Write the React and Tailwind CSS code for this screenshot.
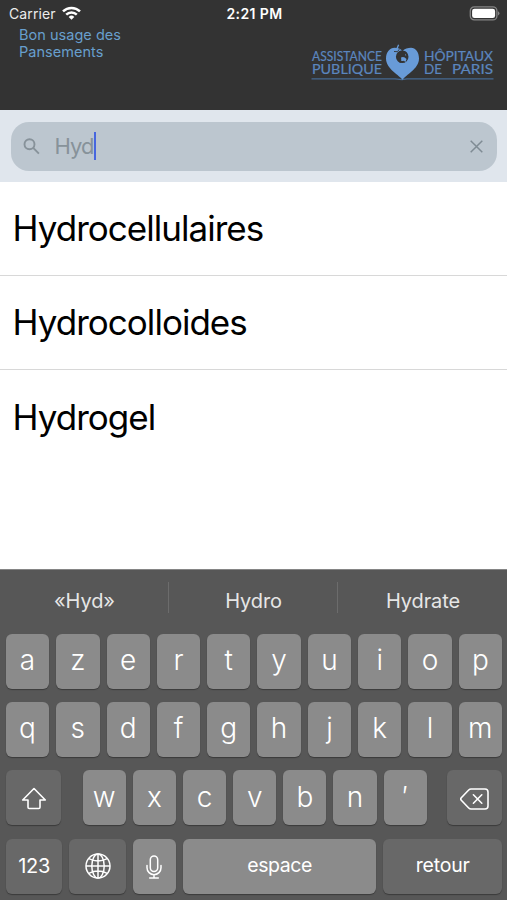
import React from "react";

function Key({ children, className = "", label = "text-[28px] font-[360] pb-[2px]", dark = false }) {
  return (
    <div
      className={`flex h-[55px] items-center justify-center rounded-[6px] leading-none text-white shadow-[0_1px_1px_#3b3b3b] ${
        dark ? "bg-[#686868]" : "bg-[#8b8b8b]"
      } ${label} ${className}`}
    >
      {children}
    </div>
  );
}

function LetterRow({ letters }) {
  return (
    <div className="grid grid-cols-10 gap-[7px]">
      {letters.split("").map((c) => (
        <Key key={c}>{c}</Key>
      ))}
    </div>
  );
}

function StatusBar() {
  return (
    <div className="grid h-[27px] grid-cols-3 items-center pl-[9px] pr-[7px] text-white">
      <div className="flex items-center gap-[6px]">
        <span className="text-[14px] leading-none tracking-[0.12px] text-[#ececec]">Carrier</span>
        <svg className="mb-[2px] h-[14px] w-[19px]" viewBox="0 0 19 14" fill="none" stroke="#fff" strokeWidth="2.5">
          <path d="M1 5.4a12.2 12.2 0 0 1 17 0" />
          <path d="M4.2 8.6a7.6 7.6 0 0 1 10.6 0" />
          <path d="M9.5 13.7 6.7 10.9a4 4 0 0 1 5.6 0Z" fill="#fff" stroke="none" />
        </svg>
      </div>
      <span className="text-center text-[14px] font-semibold leading-none tracking-[0.4px]">2:21 PM</span>
      <svg className="h-[15px] w-[31px] justify-self-end" viewBox="0 0 31 15">
        <rect x="1.3" y="0.9" width="26.6" height="13" rx="4" fill="none" stroke="#858585" strokeWidth="1.3" />
        <rect x="3.1" y="2.7" width="23" height="9.4" rx="2.4" fill="#fff" />
        <path d="M29 5.3q3 2.1 0 4.2Z" fill="#858585" />
      </svg>
    </div>
  );
}

function Logo() {
  return (
    <svg className="h-[39px] w-[184px]" viewBox="0 0 184 39">
      <g fontFamily="Lato, sans-serif" fontSize="13" fill="#5b86bf" stroke="#5b86bf" strokeWidth="0.2">
        <text x="1" y="19" textLength="70" lengthAdjust="spacingAndGlyphs">ASSISTANCE</text>
        <text x="1" y="32" textLength="70" lengthAdjust="spacingAndGlyphs">PUBLIQUE</text>
        <text x="113" y="19" textLength="69" lengthAdjust="spacingAndGlyphs">HÔPITAUX</text>
        <text x="113" y="32" textLength="18" lengthAdjust="spacingAndGlyphs">DE</text>
        <text x="141" y="32" textLength="41" lengthAdjust="spacingAndGlyphs">PARIS</text>
      </g>
      <path d="M0.5 36.9H84l7 .7 5-.7h86.5" fill="none" stroke="#466991" strokeWidth="1.2" />
      <path d="M91.5 37.8C89 33.5 75 27 75 16.5C75 10 79 5.8 83.5 5.8C87 5.8 89.5 7 91.5 9C93.5 7 97 5.8 100 5.8C104.5 5.8 108 10 108 16.5C108 27 94.5 33 91.5 37.8Z" fill="#689bd8" />
      <circle cx="91.2" cy="14.8" r="5.2" fill="none" stroke="#333" strokeWidth="2.2" />
      <path d="M86 14q0 4.5 3.5 7l1.5-4 1.5 1 3.5-.5 1-2.5-3-2 1.500-3-4-1.500-3 .5Z" fill="#333" />
      <path d="M90 15.500q3-1.500 5.500 1.500l-1 3-2-1.500-2 .5Z" fill="#689bd8" />
      <path d="M83 9.500l3.500 .2 1.800-2.500" fill="none" stroke="#333" strokeWidth="0.9" />
      <path d="M85.3 8.2 87.6 2.8" fill="none" stroke="#689bd8" strokeWidth="1.3" />
    </svg>
  );
}

export default function App() {
  return (
    <div className="flex h-[900px] w-[507px] flex-col overflow-hidden bg-white font-['Inter','Liberation_Sans',sans-serif]">
      <header className="h-[110px] shrink-0 bg-[#333333]">
        <StatusBar />
        <div className="flex justify-between pl-[19px] pr-[12px]">
          <p className="mt-[-1px] w-[130px] text-[14.5px] leading-[17.4px] tracking-[0.03px] text-[#689fcd]">
            Bon usage des
            <br />
            Pansements
          </p>
          <div className="pt-[15px]">
            <Logo />
          </div>
        </div>
      </header>

      <div className="h-[72px] shrink-0 bg-[#e0e6ed] px-[10.5px] pt-[12px]">
        <div className="flex h-[49px] items-center rounded-[18px] bg-[#bcc6cf] pl-[12px] pr-[14px]">
          <svg className="h-[17px] w-[17px]" viewBox="0 0 17 17" fill="none" stroke="#87929a" strokeWidth="1.9">
            <circle cx="6.5" cy="6.2" r="5" />
            <path d="m10.2 9.9 5.7 5.8" />
          </svg>
          <span className="ml-[15px] pb-[2px] text-[22px] leading-none tracking-[-0.9px] text-[#87929a]">Hyd</span>
          <span className="mb-[2px] h-[28px] w-[2.5px] bg-[#4766df]" />
          <svg className="ml-auto h-[13px] w-[13px]" viewBox="0 0 13 13" fill="none" stroke="#7f8b94" strokeWidth="1.5">
            <path d="m.7.7 11.6 11.6M12.3.7.7 12.3" />
          </svg>
        </div>
      </div>

      <main className="flex-1 text-[35px] text-black">
        {["Hydrocellulaires", "Hydrocolloides", "Hydrogel"].map((t, i) => (
          <div
            key={t}
            className={`flex h-[94px] items-center pl-[12.5px] leading-none tracking-[-0.97px] ${i < 2 ? "border-b-[1.5px] border-[#d8d8d8]" : ""}`}
          >
            {t}
          </div>
        ))}
      </main>

      <section className="h-[331px] shrink-0 border-t border-[#858585] bg-[#575757]">
        <div className="grid h-[63.5px] grid-cols-3 pt-[12px] text-[20px] tracking-[-0.1px] text-[#e6e6e6]">
          {["«Hyd»", "Hydro", "Hydrate"].map((t, i) => (
            <div
              key={t}
              className={`flex h-[31px] items-center justify-center pl-px pt-[7px] leading-none ${i < 2 ? "border-r border-[#6c6c6c]" : ""}`}
            >
              {t}
            </div>
          ))}
        </div>
        <div className="flex flex-col gap-[13.4px] pl-[5.9px] pr-[5px]">
          <LetterRow letters="azertyuiop" />
          <LetterRow letters="qsdfghjklm" />
          <div className="flex justify-between">
            <Key dark className="w-[55.5px]" label="">
              <svg className="mt-[2px] h-[23px] w-[26px]" viewBox="0 0 26 23" fill="none" stroke="#fff" strokeWidth="1.6" strokeLinejoin="round">
                <path d="M13 1.5 1.7 13H7v7.2q0 1.3 1.3 1.3h9.4q1.3 0 1.3-1.3V13h5.3Z" />
              </svg>
            </Key>
            <div className="ml-px grid w-[344px] grid-cols-7 gap-[7px]">
              {"wxcvbn′".split("").map((c) => (
                <Key key={c}>{c}</Key>
              ))}
            </div>
            <Key dark className="w-[55px]" label="">
              <svg className="mt-[2px] h-[22px] w-[29px]" viewBox="0 0 29 22" fill="none" stroke="#fff" strokeWidth="1.6" strokeLinejoin="round" strokeLinecap="round">
                <path d="M11 1h14q3 0 3 3v14q0 3-3 3H11q-1.3 0-2.3-1L1.3 12.3q-1.2-1.3 0-2.6L8.7 2q1-1 2.3-1Z" />
                <path d="m13.4 6.8 8.4 8.4M21.8 6.8l-8.4 8.4" />
              </svg>
            </Key>
          </div>
          <div className="flex gap-[7px]">
            <Key dark className="w-[56.5px]" label="text-[20px] tracking-[-0.3px]">123</Key>
            <Key dark className="w-[56.5px]" label="">
              <svg className="h-[26px] w-[26px]" viewBox="0 0 26 26" fill="none" stroke="#fff" strokeWidth="1.5">
                <circle cx="13" cy="13" r="12" />
                <ellipse cx="13" cy="13" rx="6.2" ry="12" />
                <path d="M13 1v24M1 13h24M3.8 5.6q9.2 4.6 18.4 0M3.8 20.4q9.2-4.6 18.4 0" />
              </svg>
            </Key>
            <Key className="w-[43px]" label="">
              <svg className="mt-[2px] h-[24px] w-[16px]" viewBox="0 0 16 24" fill="none" stroke="#fff" strokeWidth="1.5" strokeLinecap="round">
                <rect x="4.3" y="1" width="7.4" height="15.5" rx="3.7" />
                <path d="M1 10.5v2.2a7 7 0 0 0 14 0v-2.2M8 19.7V23M3.7 23h8.6" />
              </svg>
            </Key>
            <Key className="w-[193.5px]" label="text-[19.5px] tracking-[-0.4px] pb-px">espace</Key>
            <Key dark className="flex-1" label="text-[19.5px] tracking-[-0.2px] pb-px">retour</Key>
          </div>
        </div>
      </section>
    </div>
  );
}
